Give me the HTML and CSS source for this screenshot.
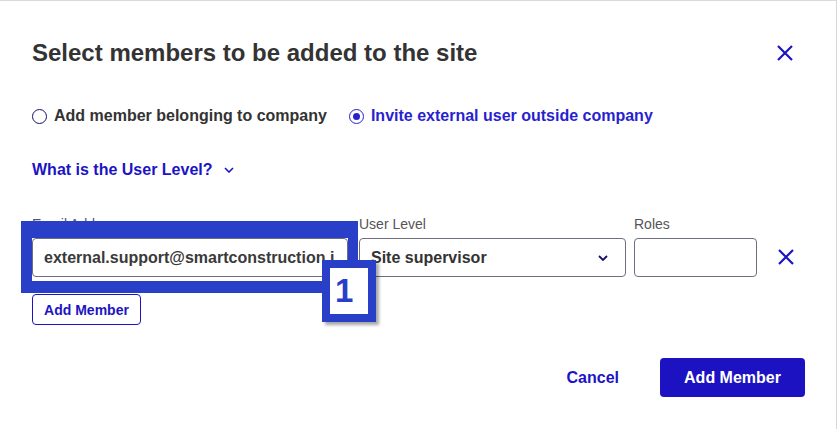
FILE: index.html
```html
<!DOCTYPE html>
<html lang="en">
  <head>
    <meta charset="UTF-8" />
    <title>Select members</title>
    <link rel="stylesheet" href="styles.css">
  </head>
  <body>
    <div class="dialog">
      <!-- Header -->
      <div class="dialog-header">
        <h2 class="dialog-title">Select members to be added to the site</h2>
        <button class="icon-btn close-btn" aria-label="Close">
          <svg width="18" height="18" viewBox="0 0 18 18"><path d="M2 2 L16 16 M16 2 L2 16" stroke="currentColor" stroke-width="2.2" fill="none"/></svg>
        </button>
      </div>

      <!-- Member type -->
      <div class="radio-row">
        <label class="radio">
          <span class="radio-dot"></span>
          Add member belonging to company
        </label>
        <label class="radio checked">
          <span class="radio-dot"></span>
          Invite external user outside company
        </label>
      </div>

      <!-- User level help -->
      <div class="help-toggle">
        What is the User Level?
        <svg width="10" height="6" viewBox="0 0 10 6"><path d="M1 1 L5 5 L9 1" stroke="currentColor" stroke-width="1.6" fill="none"/></svg>
      </div>

      <!-- Member row -->
      <div class="member-row">
        <div class="field field-email">
          <span class="field-label">Email Address</span>
          <div class="input email">external.support@smartconstruction.i</div>
          <div class="callout"></div>
          <div class="callout-badge">1</div>
        </div>
        <div class="field field-level">
          <span class="field-label">User Level</span>
          <div class="input select">
            Site supervisor
            <svg width="10" height="6" viewBox="0 0 10 6"><path d="M1 1 L5 5 L9 1" stroke="currentColor" stroke-width="1.8" fill="none"/></svg>
          </div>
        </div>
        <div class="field field-roles">
          <span class="field-label">Roles</span>
          <div class="input"></div>
        </div>
        <button class="icon-btn remove-btn" aria-label="Remove">
          <svg width="18" height="18" viewBox="0 0 18 18"><path d="M2 2 L16 16 M16 2 L2 16" stroke="currentColor" stroke-width="2.2" fill="none"/></svg>
        </button>
      </div>

      <button class="btn-outline">Add Member</button>

      <!-- Footer -->
      <div class="dialog-footer">
        <button class="btn-link">Cancel</button>
        <button class="btn-primary">Add Member</button>
      </div>
    </div>
  </body>
</html>
```

FILE: styles.css
```css
body {
  margin: 0;
  font-family: "Liberation Sans", Arial, sans-serif;
  color: #333333;
  background: #ffffff;
}
button {
  font-family: inherit;
  cursor: pointer;
}
.dialog {
  width: 837px;
  height: 429px;
  padding: 0 31px 0 32px;
  box-sizing: border-box;
  border-top: 1px solid #d9d9de;
  border-right: 1px solid #d6d6da;
}
.dialog-header {
  display: flex;
  align-items: center;
  justify-content: space-between;
  padding-top: 38px;
}
.dialog-title {
  margin: 0;
  font-size: 24px;
  line-height: 28px;
  font-weight: bold;
  color: #333333;
}
.icon-btn {
  display: flex;
  padding: 0;
  border: none;
  background: none;
  color: #1c14c4;
}
.close-btn {
  margin-right: 11px;
}
.radio-row {
  display: flex;
  column-gap: 22px;
  margin-top: 39px;
}
.radio {
  display: flex;
  align-items: center;
  column-gap: 7px;
  font-size: 16px;
  font-weight: bold;
  line-height: 20px;
  color: #333333;
}
.radio-dot {
  width: 13px;
  height: 13px;
  border: 1.5px solid #16106a;
  border-radius: 50%;
  display: flex;
  align-items: center;
  justify-content: center;
}
.radio.checked {
  color: #2a1fd0;
}
.radio.checked .radio-dot {
  border-color: #2a1fd0;
}
.radio.checked .radio-dot::after {
  content: "";
  width: 7px;
  height: 7px;
  border-radius: 50%;
  background: #2a1fd0;
}
.help-toggle {
  display: flex;
  align-items: center;
  column-gap: 11px;
  margin-top: 34px;
  font-size: 16px;
  font-weight: bold;
  line-height: 20px;
  color: #1c14c4;
}
.member-row {
  display: flex;
  align-items: flex-end;
  margin-top: 36px;
}
.field {
  display: flex;
  flex-direction: column;
  row-gap: 5px;
}
.field-email {
  position: relative;
  width: 316px;
  margin-right: 11px;
}
.field-level {
  width: 267px;
  margin-right: 8px;
}
.field-roles {
  width: 123px;
  margin-right: 20px;
}
.remove-btn {
  margin-bottom: 11px;
}
.field-label {
  font-size: 14px;
  line-height: 17px;
  color: #555555;
}
.input {
  height: 39px;
  box-sizing: border-box;
  border: 1px solid #6e6e80;
  border-radius: 4px;
  padding: 0 11px;
  display: flex;
  align-items: center;
  font-size: 16px;
  color: #333333;
  white-space: nowrap;
  overflow: hidden;
}
.email {
  font-weight: bold;
  color: #3a3a3a;
  padding-right: 0;
}
.select {
  justify-content: space-between;
  font-weight: bold;
  padding-right: 17px;
}
.select svg {
  color: #16106a;
}
.callout {
  position: absolute;
  left: -11px;
  right: -10px;
  bottom: -16px;
  height: 72px;
  box-sizing: border-box;
  border: solid #2a3fc8;
  border-width: 17px 10px 12px 11px;
}
.callout-badge {
  position: absolute;
  left: 290px;
  bottom: -45px;
  width: 54px;
  height: 62px;
  box-sizing: border-box;
  border: 8px solid #2a3fc8;
  padding-left: 5px;
  background: #ffffff;
  box-shadow: 3px 3px 3px rgba(0, 0, 0, 0.35);
  display: flex;
  align-items: center;
  font-size: 33px;
  font-weight: bold;
  color: #2a3fc8;
}
.btn-outline {
  margin-top: 17px;
  width: 109px;
  height: 31px;
  border: 1px solid #1c14c4;
  border-radius: 4px;
  background: #ffffff;
  color: #1c14c4;
  font-size: 14px;
  font-weight: bold;
}
.dialog-footer {
  display: flex;
  justify-content: flex-end;
  align-items: center;
  column-gap: 41px;
  margin-top: 33px;
}
.btn-link {
  border: none;
  background: none;
  padding: 0;
  font-size: 16px;
  font-weight: bold;
  color: #1c14c4;
}
.btn-primary {
  width: 145px;
  height: 39px;
  border: none;
  border-radius: 4px;
  background: #1c12c2;
  color: #ffffff;
  font-size: 16px;
  font-weight: bold;
}
```
